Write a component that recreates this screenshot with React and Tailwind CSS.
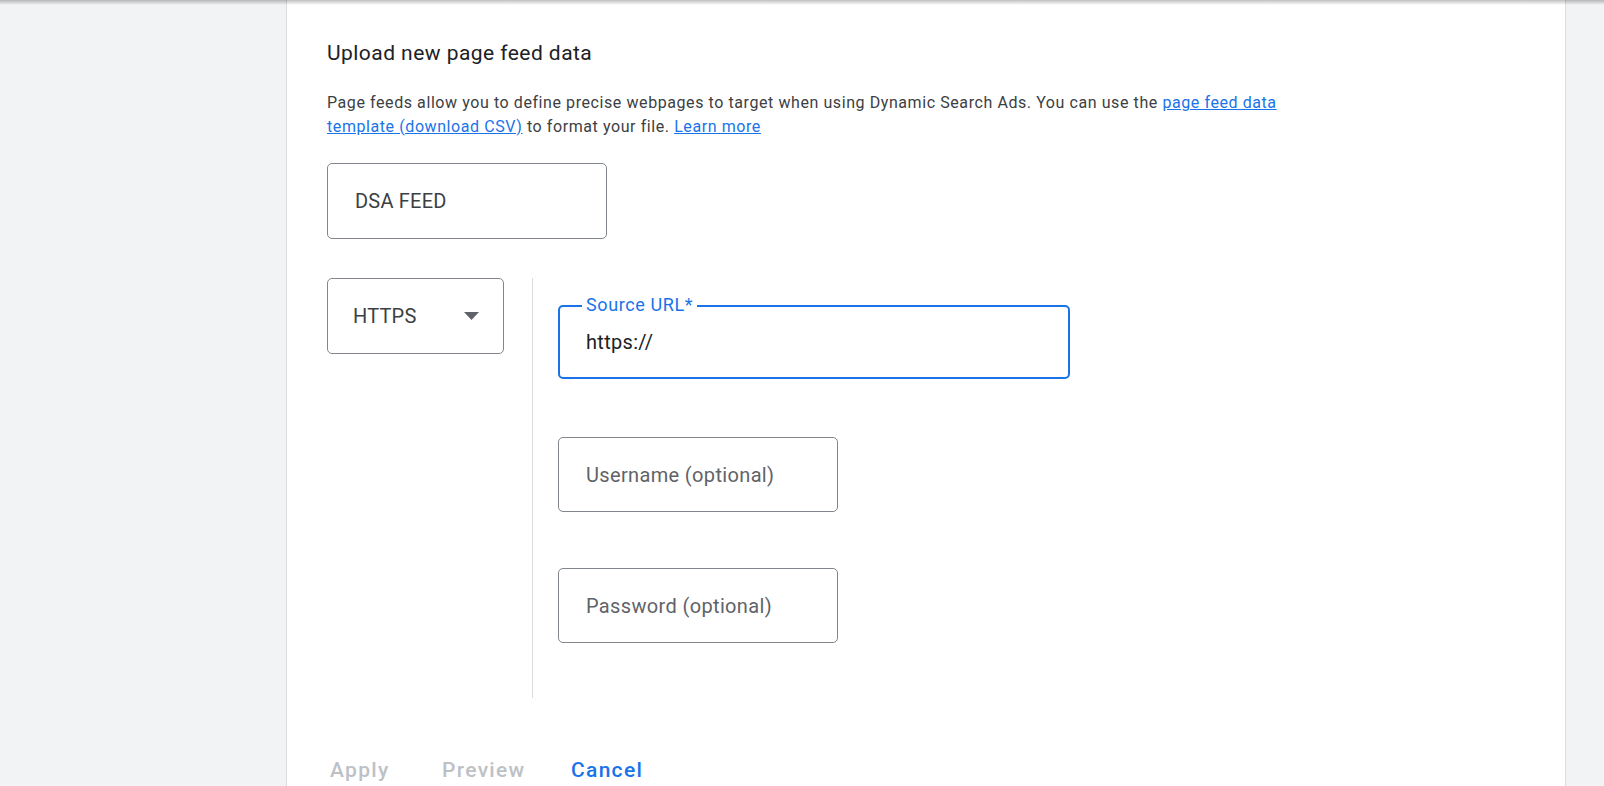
import React from "react";

const font = { fontFamily: "Roboto, 'Liberation Sans', sans-serif" };

function OutlinedBox({ width, height, children, className = "" }) {
  return (
    <div
      className={`flex items-center rounded-[5px] border border-[#80868b] bg-white pl-[27px] ${width} ${height} ${className}`}
    >
      {children}
    </div>
  );
}

export default function App() {
  return (
    <div className="relative flex h-[786px] overflow-hidden bg-[#f1f3f4]" style={font}>
      {/* top shadow */}
      <div className="absolute inset-x-0 top-0 h-[5px] bg-gradient-to-b from-black/25 to-transparent" />

      <div className="w-[286px] shrink-0" />

      <div className="w-[1280px] shrink-0 border-x border-[#dadce0] bg-white pl-[40px]">
        <h1 className="pt-[39px] text-[21px] leading-[28px] font-normal tracking-[0.45px] text-[#202124]">
          Upload new page feed data
        </h1>

        <p className="mt-[24px] whitespace-nowrap text-[16px] leading-[24px] tracking-[0.58px] text-[#3c4043]">
          Page feeds allow you to define precise webpages to target when using Dynamic Search Ads. You can use the{" "}
          <a href="#" className="text-[#1a73e8] underline">
            page feed data
            <br />
            template (download CSV)
          </a>{" "}
          to format your file.{" "}
          <a href="#" className="text-[#1a73e8] underline">
            Learn more
          </a>
        </p>

        <OutlinedBox width="w-[280px]" height="h-[76px]" className="mt-[24px] pl-[25px]">
          <span className="text-[20px] tracking-[0.2px] text-[#3c4043]">DSA FEED</span>
        </OutlinedBox>

        <div className="mt-[39px] flex items-start">
          <div className="flex h-[76px] w-[177px] items-center justify-between rounded-[5px] border border-[#80868b] pl-[25px] pr-[24px]">
            <span className="text-[20px] tracking-[0.2px] text-[#3c4043]">HTTPS</span>
            <svg width="15" height="8" viewBox="0 0 15 8">
              <path d="M0 0 L15 0 L7.5 8 Z" fill="#5f6368" />
            </svg>
          </div>

          <div className="ml-[28px] border-l border-[#dadce0] pl-[25px] pt-[27px] pb-[55px]">
            {/* focused source url field */}
            <div className="relative flex h-[74px] w-[512px] items-center rounded-[5px] border-2 border-[#1a73e8] pl-[26px]">
              <span className="absolute left-[22px] top-[-11px] bg-white px-[4px] text-[18px] leading-[18px] tracking-[0.6px] text-[#1a73e8]">
                Source URL*
              </span>
              <span className="text-[20px] tracking-[0.3px] text-[#202124]">https://</span>
            </div>

            <OutlinedBox width="w-[280px]" height="h-[75px]" className="mt-[58px] pl-[26px]">
              <span className="text-[20px] tracking-[0.35px] text-[#5f6368]">Username (optional)</span>
            </OutlinedBox>

            <OutlinedBox width="w-[280px]" height="h-[75px]" className="mt-[56px] pl-[26px]">
              <span className="text-[20px] tracking-[0.35px] text-[#5f6368]">Password (optional)</span>
            </OutlinedBox>
          </div>
        </div>

        <div className="mt-[60px] flex pl-[3px] text-[21px] leading-[24px] font-medium tracking-[1.3px]">
          <span className="w-[112px] text-[#bdc1c6]">Apply</span>
          <span className="w-[129px] text-[#bdc1c6]">Preview</span>
          <span className="text-[#1a73e8]">Cancel</span>
        </div>
      </div>
    </div>
  );
}
